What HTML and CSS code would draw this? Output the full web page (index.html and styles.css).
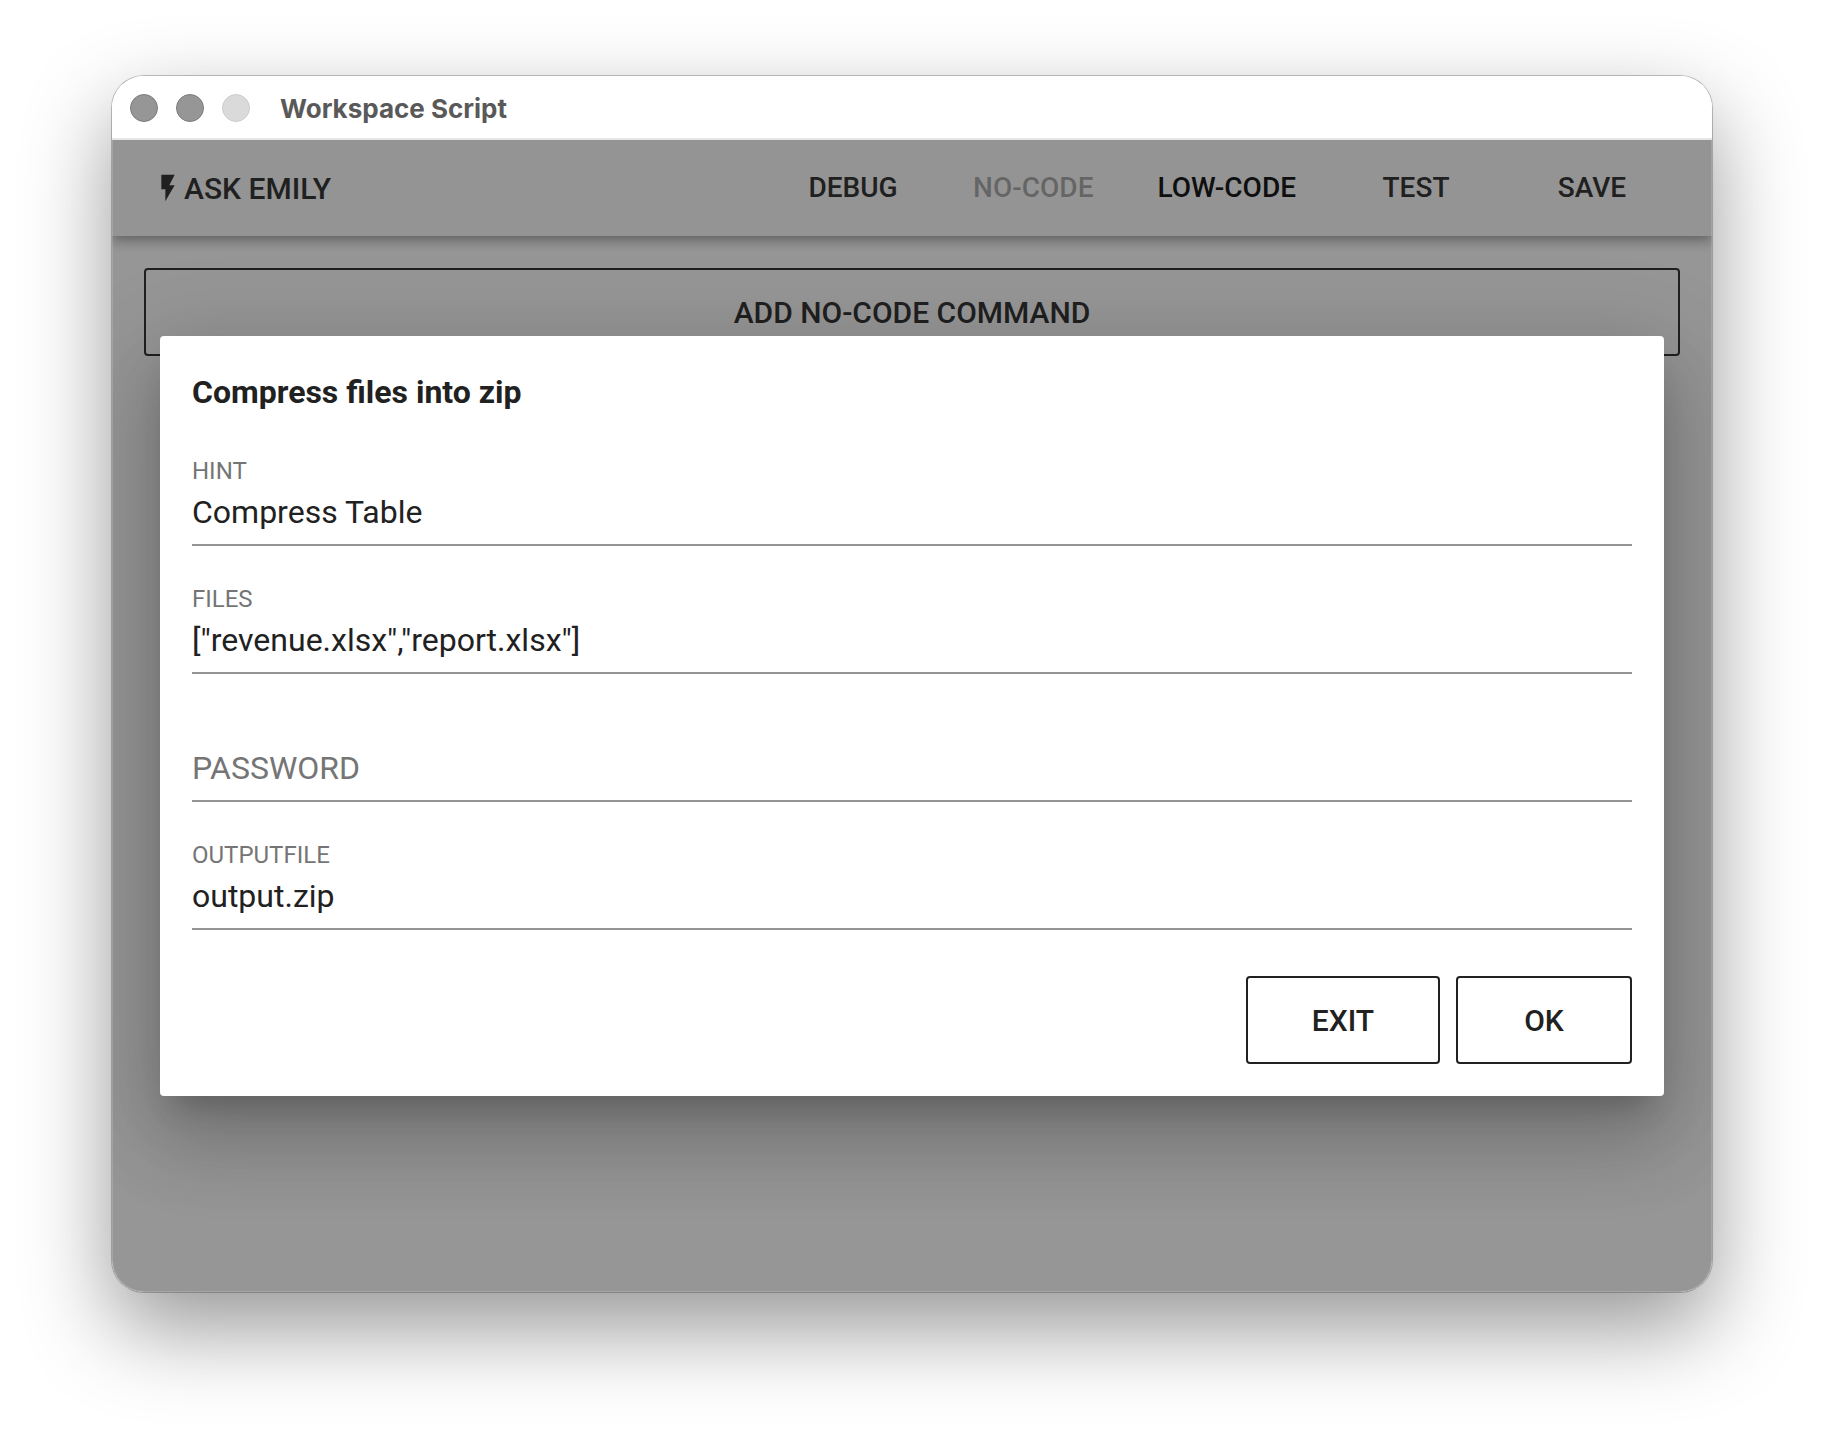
FILE: index.html
```html
<!DOCTYPE html>
<html lang="en">
<head>
    <meta charset="UTF-8">
    <title>Workspace Script</title>
    <link rel="stylesheet" href="styles.css">
</head>
<body>
    <div class="window">
        <header class="titlebar">
            <span class="light"></span>
            <span class="light"></span>
            <span class="light light-disabled"></span>
            <span class="window-title">Workspace Script</span>
        </header>

        <div class="app">
            <nav class="toolbar">
                <button type="button" class="brand">
                    <svg class="icon" viewBox="0 0 24 24" aria-hidden="true"><path d="M7 2v11h3v9l7-12h-4l4-8z"/></svg>
                    ASK EMILY
                </button>
                <div class="toolbar-items">
                    <button type="button" class="tool">DEBUG</button>
                    <button type="button" class="tool" disabled>NO-CODE</button>
                    <button type="button" class="tool tool-active">LOW-CODE</button>
                    <button type="button" class="tool">TEST</button>
                    <button type="button" class="tool">SAVE</button>
                </div>
            </nav>

            <main class="content">
                <button type="button" class="outlined add-command">ADD NO-CODE COMMAND</button>
            </main>

            <div class="overlay">
                <form class="dialog" role="dialog" aria-labelledby="dialogTitle" onsubmit="return false">
                    <h1 id="dialogTitle">Compress files into zip</h1>

                    <div class="field">
                        <label for="hint">HINT</label>
                        <input type="text" id="hint" name="hint" value="Compress Table">
                    </div>

                    <div class="field">
                        <label for="files">FILES</label>
                        <input type="text" id="files" name="files" value='["revenue.xlsx","report.xlsx"]'>
                    </div>

                    <div class="field field-empty">
                        <label for="password">PASSWORD</label>
                        <input type="text" id="password" name="password">
                    </div>

                    <div class="field">
                        <label for="outputfile">OUTPUTFILE</label>
                        <input type="text" id="outputfile" name="outputfile" value="output.zip">
                    </div>

                    <div class="actions">
                        <button type="button" class="outlined">EXIT</button>
                        <button type="submit" class="outlined">OK</button>
                    </div>
                </form>
            </div>
        </div>
    </div>
</body>
</html>
```
FILE: styles.css
```css
* {
    box-sizing: border-box;
}

body {
    display: flex;
    min-height: 100vh;
    margin: 0;
    padding: 76px 112px 148px;
    background-color: #fff;
    font-family: Roboto, sans-serif;
    color: #212121;
}

button,
input {
    font-family: inherit;
    color: inherit;
}

button {
    border: none;
    background: none;
    font-weight: 500;
    cursor: pointer;
}

/* window frame */
.window {
    display: flex;
    flex: 1;
    flex-direction: column;
    border-radius: 32px;
    box-shadow: 0 0 0 1px rgba(0, 0, 0, 0.23), 0 36px 88px rgba(0, 0, 0, 0.41);
}

.titlebar {
    display: flex;
    align-items: center;
    gap: 18px;
    height: 64px;
    padding: 2px 18px 0;
    border-bottom: 2px solid #e6e6e6;
    border-radius: 32px 32px 0 0;
    background-color: #fff;
}

.light {
    width: 28px;
    height: 28px;
    border: 1px solid #7c7c7c;
    border-radius: 50%;
    background-color: #969696;
}

.light-disabled {
    border-color: #cdcdcd;
    background-color: #dadada;
}

.window-title {
    margin-left: 12px;
    font-family: Inter, sans-serif;
    font-size: 26px;
    font-weight: 700;
    color: #595959;
}

.app {
    position: relative;
    display: flex;
    flex: 1;
    flex-direction: column;
    overflow: hidden;
    border-radius: 0 0 32px 32px;
    background-color: #fafafa;
}

/* toolbar */
.toolbar {
    display: flex;
    align-items: center;
    justify-content: space-between;
    height: 96px;
    padding: 0 40px;
    background-color: #f5f5f5;
    box-shadow: 0 4px 8px -2px rgba(0, 0, 0, 0.2), 0 8px 10px rgba(0, 0, 0, 0.14), 0 2px 20px rgba(0, 0, 0, 0.12);
}

.brand {
    display: flex;
    align-items: center;
    padding: 0;
    font-size: 30px;
}

.icon {
    width: 32px;
    height: 32px;
    fill: currentColor;
}

.toolbar-items {
    display: flex;
    gap: 16px;
}

.tool {
    min-width: 160px;
    padding: 0 24px 2px;
    font-size: 28px;
}

.tool:disabled {
    color: rgba(0, 0, 0, 0.36);
    cursor: default;
}

.tool-active {
    color: #000;
}

.content {
    padding: 32px;
}

.outlined {
    min-width: 176px;
    height: 88px;
    padding: 0 64px;
    border: 2px solid #212121;
    border-radius: 4px;
    font-size: 30px;
}

.add-command {
    width: 100%;
}

/* dialog */
.overlay {
    position: absolute;
    inset: 0;
    display: flex;
    align-items: center;
    padding: 0 48px;
    background-color: rgba(33, 33, 33, 0.46);
}

/* light line along the inner edge of the window */
.overlay::after {
    content: "";
    position: absolute;
    inset: 0;
    border: 1px solid rgba(255, 255, 255, 0.15);
    border-top: none;
    border-radius: 0 0 32px 32px;
    pointer-events: none;
}

.dialog {
    flex: 1;
    padding: 32px;
    border-radius: 4px;
    background-color: #fff;
    box-shadow: 0 22px 30px -14px rgba(0, 0, 0, 0.2), 0 48px 76px 6px rgba(0, 0, 0, 0.14), 0 18px 92px 16px rgba(0, 0, 0, 0.12);
}

h1 {
    margin: 0 0 2px;
    font-size: 32px;
    line-height: 48px;
}

.field {
    position: relative;
    padding-top: 40px;
}

label {
    display: block;
    font-size: 24px;
    line-height: 26px;
    color: #757575;
}

input {
    display: block;
    width: 100%;
    height: 62px;
    padding: 0 0 4px;
    border: none;
    border-bottom: 2px solid #949494;
    outline: none;
    background: none;
    font-size: 32px;
}

.field-empty {
    padding-top: 66px;
}

.field-empty label {
    position: absolute;
    bottom: 14px;
    font-size: 32px;
    line-height: 40px;
}

.actions {
    display: flex;
    justify-content: flex-end;
    gap: 16px;
    margin-top: 46px;
}
```
